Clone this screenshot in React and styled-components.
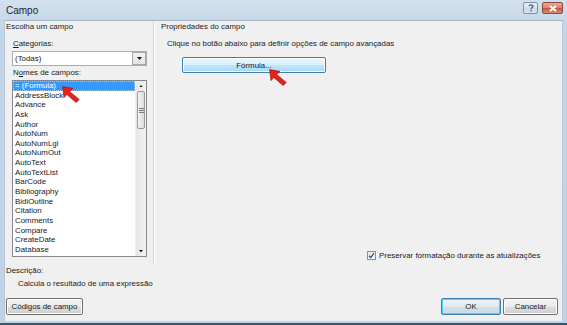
import React from 'react';
import styled, { createGlobalStyle, css } from 'styled-components';

const GlobalStyle = createGlobalStyle`
  html, body { margin: 0; padding: 0; background: #ffffff; }
  body { font-family: "Liberation Sans", Arial, sans-serif; }
`;

const FIELDS = [
  '= (Formula)',
  'AddressBlock',
  'Advance',
  'Ask',
  'Author',
  'AutoNum',
  'AutoNumLgl',
  'AutoNumOut',
  'AutoText',
  'AutoTextList',
  'BarCode',
  'Bibliography',
  'BidiOutline',
  'Citation',
  'Comments',
  'Compare',
  'CreateDate',
  'Database',
];

const Window = styled.div`
  position: relative;
  width: 567px;
  height: 325px;
  box-sizing: border-box;
  display: flex;
  flex-direction: column;
  background: linear-gradient(#d3e0ed, #c3d5e8 30px, #bfd2e6);
  border-bottom: 2px solid #35596a;
  font-size: 7.9px;
  color: #1a1a1a;
`;

const TitleBar = styled.div`
  height: 20px;
  flex: none;
  display: flex;
  align-items: center;
  padding: 0 4px 0 6px;
  font-size: 10px;
  color: #1e1e1e;
`;

const Title = styled.span`
  flex: 1;
`;

const CaptionButton = styled.div`
  height: 12px;
  box-sizing: border-box;
  border: 1px solid #7d92a8;
  border-radius: 2px;
  display: flex;
  align-items: center;
  justify-content: center;
  margin-top: -4px;
  ${(p) =>
    p.$close
      ? css`
          width: 21px;
          margin-left: 4px;
          background: linear-gradient(#e9a99b, #d8806d 50%, #c8523c 51%, #d98a74);
          border-color: #8a4a3e;
          color: #fff;
        `
      : css`
          width: 15px;
          background: linear-gradient(#e7eff7, #d6e2ef 50%, #c8d8ea 51%, #d9e5f1);
          color: #3b5a78;
        `}
`;

const Client = styled.div`
  flex: 1;
  display: flex;
  flex-direction: column;
  margin: 0 4px 2px 4px;
  background: #f0f0f0;
  border-top: 1px solid #a4b5c7;
  border-left: 1px solid #b7c7d8;
  border-right: 1px solid #b7c7d8;
`;

const Main = styled.div`
  height: 244px;
  display: flex;
  flex: none;
`;

const LeftColumn = styled.div`
  width: 148px;
  display: flex;
  flex-direction: column;
`;

const RightColumn = styled.div`
  flex: 1;
  display: flex;
  flex-direction: column;
  border-left: 1px solid #d5d5d5;
  box-shadow: inset 1px 0 0 #ffffff;
`;

const GroupLabel = styled.div`
  line-height: 12px;
  height: 12px;
  margin-left: ${(p) => p.$indent || 1}px;
  white-space: nowrap;
`;

const FieldLabel = styled.div`
  line-height: 12px;
  height: 12px;
  margin: ${(p) => p.$top || 0}px 0 0 ${(p) => p.$indent || 8}px;
  white-space: nowrap;
  u { text-decoration: underline; }
`;

const Combo = styled.div`
  margin: 1px 0 0 7px;
  width: 135px;
  height: 15px;
  box-sizing: border-box;
  border: 1px solid #abadb3;
  background: #fff;
  display: flex;
  align-items: stretch;
`;

const ComboText = styled.div`
  flex: 1;
  line-height: 13px;
  padding-left: 2px;
`;

const ComboButton = styled.div`
  width: 12px;
  border: 1px solid #a7a7a7;
  background: linear-gradient(#f4f4f4, #e3e3e3);
  display: flex;
  align-items: center;
  justify-content: center;
`;

const ListBox = styled.div`
  margin: 1px 0 0 7px;
  width: 135px;
  height: 177px;
  box-sizing: border-box;
  border: 1px solid #828790;
  background: #fff;
  display: flex;
  overflow: hidden;
`;

const Items = styled.div`
  flex: 1;
`;

const Item = styled.div`
  height: 9.65px;
  line-height: 9.65px;
  padding-left: 2px;
  white-space: nowrap;
  ${(p) =>
    p.$selected &&
    css`
      background: #3399ff;
      color: #fff;
      outline: 1px dotted #9cc9f5;
      outline-offset: -1px;
    `}
`;

const ScrollBar = styled.div`
  width: 10px;
  background: linear-gradient(90deg, #e6e6e6, #f2f2f2);
  display: flex;
  flex-direction: column;
  border-left: 1px solid #eeeeee;
`;

const ScrollArrow = styled.div`
  height: 10px;
  display: flex;
  align-items: center;
  justify-content: center;
`;

const Thumb = styled.div`
  height: 36px;
  margin: 0 1px;
  border: 1px solid #9a9a9a;
  border-radius: 2px;
  background: linear-gradient(90deg, #f3f3f3, #dcdcdc);
  display: flex;
  align-items: center;
  justify-content: center;
`;

const Track = styled.div`
  flex: 1;
`;

const Hint = styled.div`
  line-height: 12px;
  height: 12px;
  margin: 5px 0 0 13px;
  white-space: nowrap;
`;

const Button = styled.button`
  font: inherit;
  color: #1a1a1a;
  height: ${(p) => p.$height || 17}px;
  width: ${(p) => p.$width}px;
  padding: 0;
  box-sizing: border-box;
  border: 1px solid #707070;
  border-radius: 2px;
  background: linear-gradient(#f2f2f2, #ebebeb 50%, #dddddd 51%, #cfcfcf);
  box-shadow: inset 0 0 0 1px #fcfcfc;
  ${(p) =>
    p.$hot &&
    css`
      border-color: #3c7fb1;
      background: linear-gradient(#eaf6fd, #d9f0fc 50%, #bee6fd 51%, #a7d9f5);
    `}
  ${(p) =>
    p.$default &&
    css`
      border-color: #3c7fb1;
      box-shadow: inset 0 0 0 1px #48d4f6;
      background: linear-gradient(#eef3f6, #e3eaef 50%, #d3dfe7 51%, #c9d9e3);
    `}
`;

const FormulaButton = styled(Button)`
  margin: 7px 0 0 28px;
`;

const CheckRow = styled.label`
  margin: auto 0 4px 213px;
  display: flex;
  align-items: center;
  gap: 3px;
  height: 12px;
  white-space: nowrap;
`;

const CheckBox = styled.span`
  width: 9px;
  height: 9px;
  box-sizing: border-box;
  border: 1px solid #8e8f8f;
  background: linear-gradient(135deg, #e6e6e6, #fbfbfb);
  display: flex;
  align-items: center;
  justify-content: center;
`;

const Description = styled.div`
  height: 33px;
  flex: none;
`;

const Footer = styled.div`
  display: flex;
  align-items: center;
  padding: 0 4px 0 1px;
  gap: 2px;
`;

const Spacer = styled.div`
  flex: 1;
`;

const Pointer = styled.svg`
  position: absolute;
  left: ${(p) => p.$x}px;
  top: ${(p) => p.$y}px;
`;

function RedArrow({ x, y }) {
  return (
    <Pointer $x={x} $y={y} width="18" height="17" viewBox="0 0 18 17">
      <path
        d="M0.6 0.6 L11 2.4 L7.6 5.6 L17.2 13.4 L14.2 16.5 L4.8 8.4 L2 11.6 Z"
        fill="#e8211d"
        stroke="#a8100c"
        strokeWidth="0.7"
        strokeLinejoin="round"
      />
    </Pointer>
  );
}

function Triangle({ up, size = 5 }) {
  return (
    <svg width={size} height={size / 2 + 0.5} viewBox="0 0 6 3.5">
      <path d={up ? 'M0 3.5 L3 0 L6 3.5 Z' : 'M0 0 L6 0 L3 3.5 Z'} fill="#1a1a1a" />
    </svg>
  );
}

export default function App() {
  return (
    <>
      <GlobalStyle />
      <Window>
        <TitleBar>
          <Title>Campo</Title>
          <CaptionButton>
            <svg width="6" height="8" viewBox="0 0 6 8">
              <path d="M1 2.2 C1 0.6 5 0.4 5 2.3 C5 3.6 3 3.6 3 5.2" fill="none" stroke="#3b5a78" strokeWidth="1.2" />
              <rect x="2.4" y="6.2" width="1.3" height="1.3" fill="#3b5a78" />
            </svg>
          </CaptionButton>
          <CaptionButton $close>
            <svg width="8" height="7" viewBox="0 0 8 7">
              <path d="M1 1 L7 6 M7 1 L1 6" stroke="#fff" strokeWidth="1.8" />
            </svg>
          </CaptionButton>
        </TitleBar>
        <Client>
          <Main>
            <LeftColumn>
              <GroupLabel>Escolha um campo</GroupLabel>
              <FieldLabel $top={5}>
                <u>C</u>ategorias:
              </FieldLabel>
              <Combo>
                <ComboText>(Todas)</ComboText>
                <ComboButton>
                  <Triangle />
                </ComboButton>
              </Combo>
              <FieldLabel $top={1}>
                N<u>o</u>mes de campos:
              </FieldLabel>
              <ListBox>
                <Items>
                  {FIELDS.map((name, i) => (
                    <Item key={name} $selected={i === 0}>
                      {name}
                    </Item>
                  ))}
                </Items>
                <ScrollBar>
                  <ScrollArrow>
                    <Triangle up size={4} />
                  </ScrollArrow>
                  <Thumb>
                    <svg width="5" height="5" viewBox="0 0 5 5">
                      <path d="M0 0.5 H5 M0 2.5 H5 M0 4.5 H5" stroke="#7a7a7a" strokeWidth="1" />
                    </svg>
                  </Thumb>
                  <Track />
                  <ScrollArrow>
                    <Triangle size={4} />
                  </ScrollArrow>
                </ScrollBar>
              </ListBox>
            </LeftColumn>
            <RightColumn>
              <GroupLabel $indent={7}>Propriedades do campo</GroupLabel>
              <Hint>Clique no botão abaixo para definir opções de campo avançadas</Hint>
              <FormulaButton $hot $width={144} $height={16}>
                Fórmula...
              </FormulaButton>
              <CheckRow>
                <CheckBox>
                  <svg width="7" height="7" viewBox="0 0 7 7">
                    <path d="M1 3.8 L2.8 5.6 L6 1" fill="none" stroke="#2a4a8a" strokeWidth="1.3" />
                  </svg>
                </CheckBox>
                Preservar formatação durante as atualizações
              </CheckRow>
            </RightColumn>
          </Main>
          <Description>
            <GroupLabel>Descrição:</GroupLabel>
            <FieldLabel $top={1} $indent={13}>
              Calcula o resultado de uma expressão
            </FieldLabel>
          </Description>
          <Footer>
            <Button $width={77}>Códigos de campo</Button>
            <Spacer />
            <Button $default $width={60}>
              OK
            </Button>
            <Button $width={55}>Cancelar</Button>
          </Footer>
        </Client>
        <RedArrow x={62} y={86} />
        <RedArrow x={269} y={69} />
      </Window>
    </>
  );
}
